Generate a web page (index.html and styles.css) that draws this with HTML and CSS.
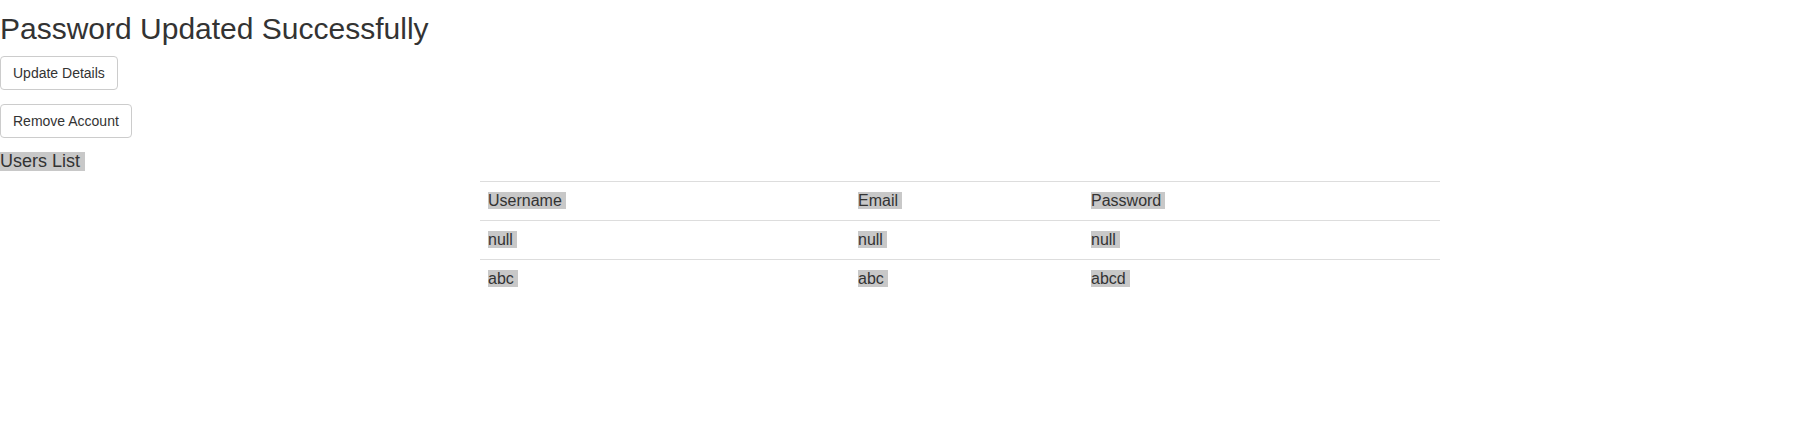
FILE: index.html
```html
<!DOCTYPE html>
<html>
<head>
<meta charset="utf-8">
<link rel="stylesheet" href="styles.css">
</head>
<body>
<h2 class="title">Password Updated Successfully</h2>
<div class="actions">
  <button class="btn">Update Details</button>
  <button class="btn">Remove Account</button>
</div>
<div class="list-label"><span class="sel">Users List</span></div>
<table class="users">
  <colgroup>
    <col class="c1"><col class="c2"><col class="c3">
  </colgroup>
  <tr><td><span class="sel">Username</span></td><td><span class="sel">Email</span></td><td><span class="sel">Password</span></td></tr>
  <tr><td><span class="sel">null</span></td><td><span class="sel">null</span></td><td><span class="sel">null</span></td></tr>
  <tr><td><span class="sel">abc</span></td><td><span class="sel">abc</span></td><td><span class="sel">abcd</span></td></tr>
</table>
</body>
</html>
```

FILE: styles.css
```css
html, body {
  margin: 0;
  padding: 0;
  background: #fff;
  color: #333;
  font-family: "Liberation Sans", Arial, sans-serif;
  font-size: 14px;
}
.title {
  margin: 12px 0 0 0;
  font-size: 30px;
  font-weight: 500;
  line-height: 33px;
  color: #333;
}
.actions {
  display: flex;
  flex-direction: column;
  align-items: flex-start;
  gap: 14px;
  margin-top: 11px;
}
.btn {
  box-sizing: border-box;
  height: 34px;
  padding: 6px 12px;
  font-family: "Liberation Sans", Arial, sans-serif;
  font-size: 14px;
  line-height: 20px;
  color: #333;
  background: #fff;
  border: 1px solid #ccc;
  border-radius: 4px;
  margin: 0;
}
.list-label {
  margin-top: 14px;
  font-size: 18px;
  line-height: 19px;
  height: 19px;
}
.list-label .sel {
  display: inline-block;
  line-height: 19px;
  height: 19px;
  padding-right: 5px;
}
.sel {
  background: #c8c8c8;
  padding-right: 4px;
}
.users {
  margin: 10px 0 0 480px;
  width: 960px;
  border-collapse: collapse;
  border-spacing: 0;
  table-layout: fixed;
}
.c1 { width: 370px; }
.c2 { width: 233px; }
.c3 { width: 357px; }
.users td {
  padding: 8px;
  font-size: 16px;
  line-height: 22px;
  border-top: 1px solid #ddd;
  vertical-align: top;
  text-align: left;
}
```
